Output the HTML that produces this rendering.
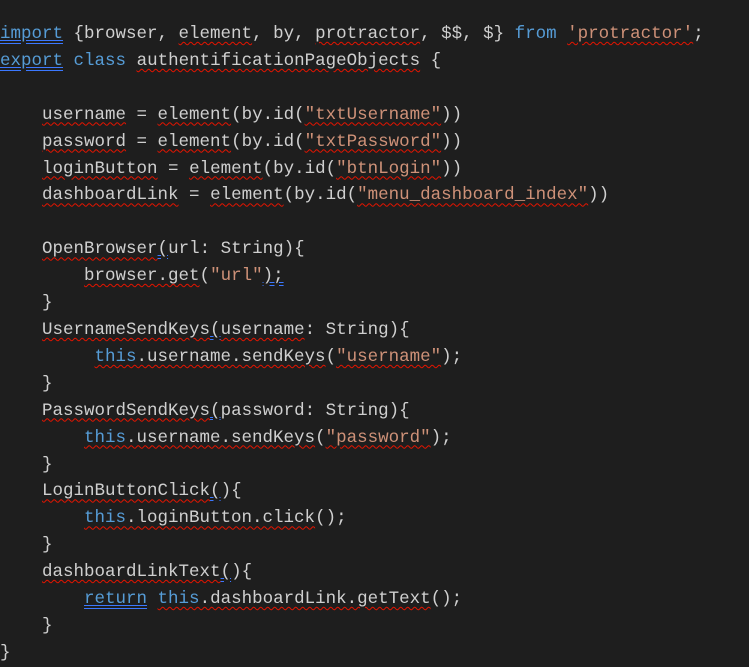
<!DOCTYPE html>
<html><head><meta charset="utf-8"><style>
html,body{margin:0;padding:0;background:#1e1e1e;}
body{width:749px;height:664px;overflow:hidden;}
pre{margin:0;position:absolute;left:0;top:21px;font-family:"Liberation Mono",monospace;font-size:17.5px;line-height:26.9px;color:#cfcfcf;white-space:pre;}
.k{color:#569cd6}
.s{color:#ce9178}
.r{text-decoration:underline wavy #e51400;text-decoration-thickness:1px;text-underline-offset:3px}
.b{text-decoration:underline double #3b78ff;text-underline-offset:2px}
</style></head><body>
<pre><span class="k b">import</span> {browser, <span class="r">element</span>, by, <span class="r">protractor</span>, $$, $} <span class="k">from</span> <span class="s r">'protractor'</span>;
<span class="k b">export</span> <span class="k">class</span> <span class="r">authentificationPageObjects</span> {

    <span class="r">username</span> = <span class="r">element</span>(by.id(<span class="s r">"txtUsername"</span>))
    <span class="r">password</span> = <span class="r">element</span>(by.id(<span class="s r">"txtPassword"</span>))
    <span class="r">loginButton</span> = <span class="r">element</span>(by.id(<span class="s r">"btnLogin"</span>))
    <span class="r">dashboardLink</span> = <span class="r">element</span>(by.id(<span class="s r">"menu_dashboard_index"</span>))

    <span class="r">OpenBrowser</span><span class="b">(</span>url: String){
        <span class="r">browser.get</span>(<span class="s">"url"</span><span class="b">);</span>
    }
    <span class="r">UsernameSendKeys</span><span class="b">(</span><span class="r">username</span>: String){
         <span class="k r">this</span><span class="r">.username.sendKeys</span>(<span class="s r">"username"</span>);
    }
    <span class="r">PasswordSendKeys</span><span class="b">(</span>password: String){
        <span class="k r">this</span><span class="r">.username.sendKeys</span>(<span class="s r">"password"</span>);
    }
    <span class="r">LoginButtonClick</span><span class="b">(</span>){
        <span class="k r">this</span><span class="r">.loginButton.click</span>();
    }
    <span class="r">dashboardLinkText</span><span class="b">(</span>){
        <span class="k b">return</span> <span class="k r">this</span><span class="r">.dashboardLink.getText</span>();
    }
}</pre>
</body></html>
